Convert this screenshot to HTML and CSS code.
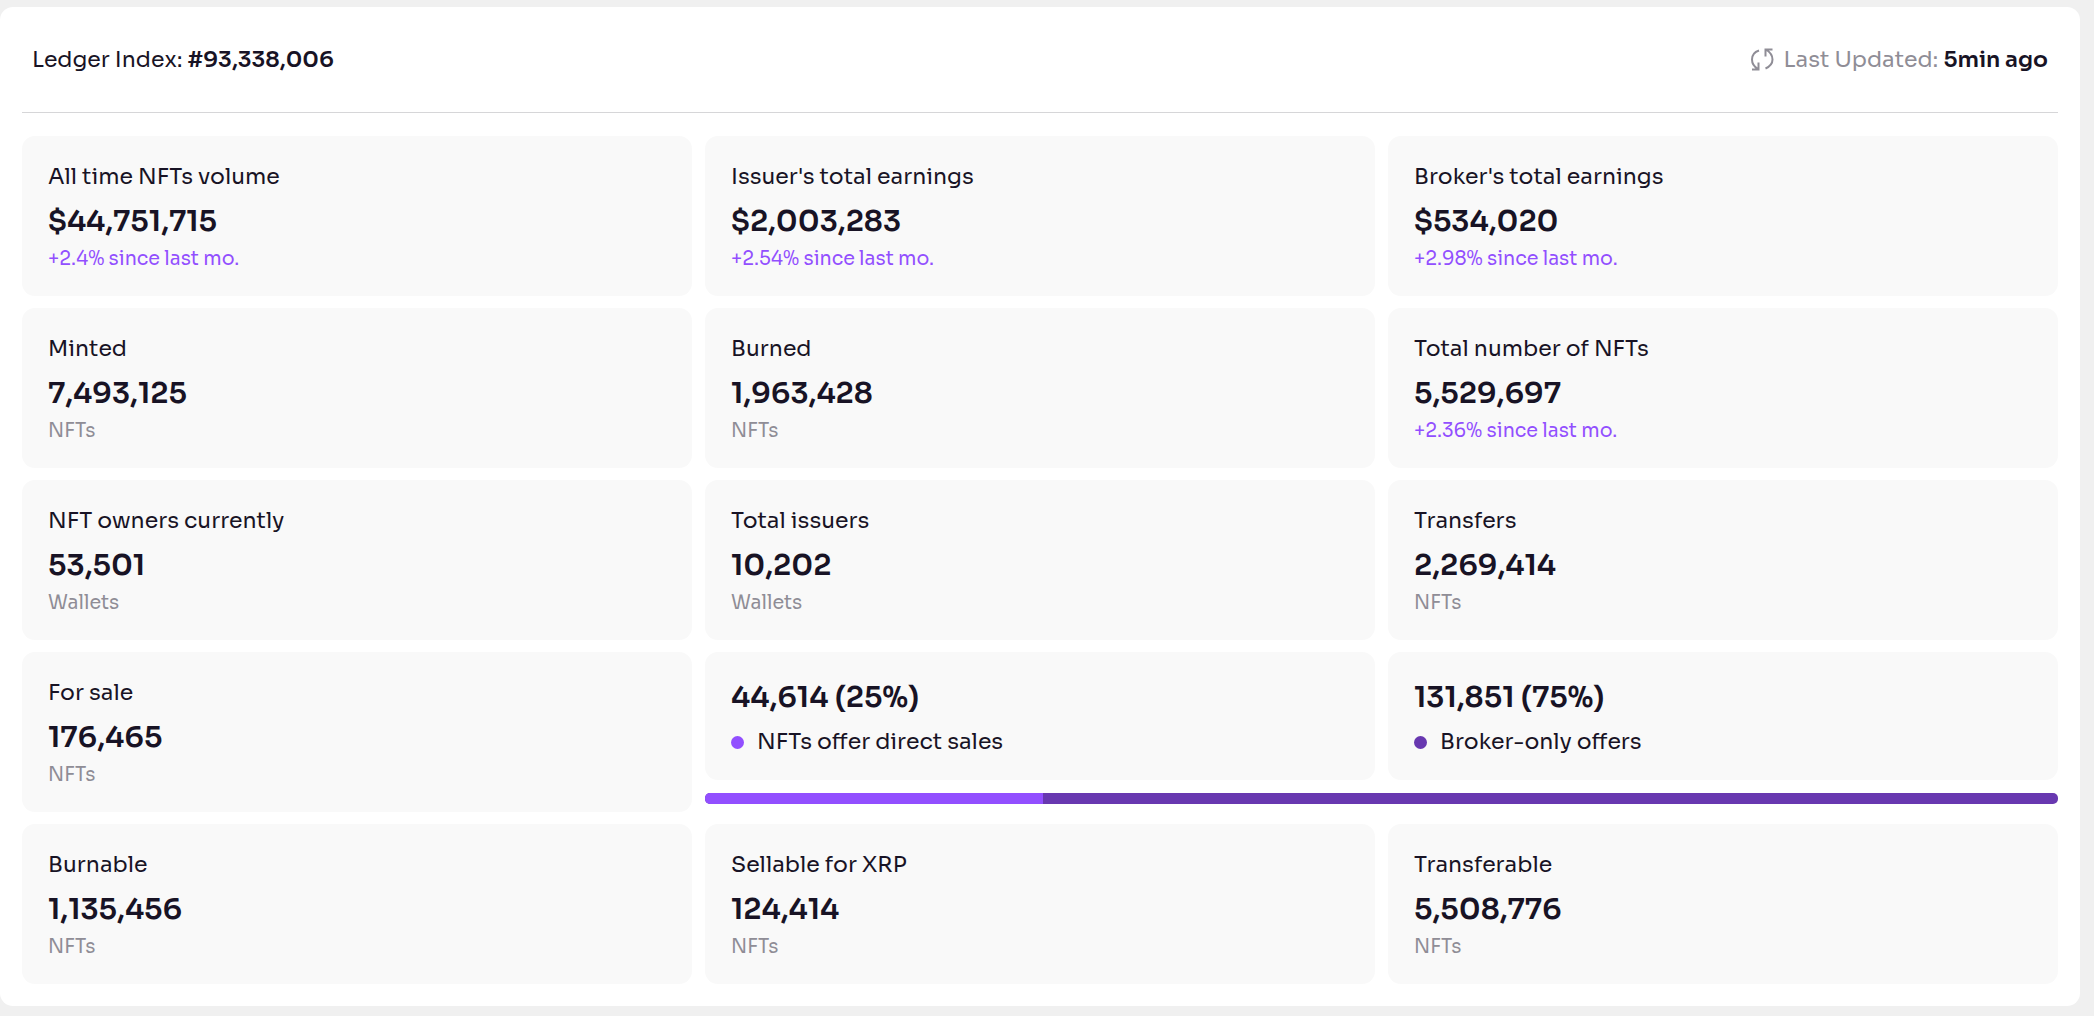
FILE: index.html
```html
<!DOCTYPE html>
<html lang="en">
<head>
<meta charset="utf-8">
<meta name="viewport" content="width=device-width, initial-scale=1">
<title>NFT statistics</title>
<link rel="stylesheet" href="styles.css">
</head>
<body>
<main class="panel">
  <header class="panel-header">
    <p class="ledger">Ledger Index: <strong>#93,338,006</strong></p>
    <p class="updated">
      <svg class="refresh-icon" viewBox="0 0 24 24" aria-hidden="true">
        <path d="M9 2.5C4.500 4 2 7.500 2 11.500C2 15.500 4.500 19 8 21M2 21.500H8.500V14.500"/>
        <path d="M15.500 20.500C20 18.500 22.500 15.500 22.500 11.500C22.500 7.500 20 4 16 1.500M22.500 1.500H15.500V8.500"/>
      </svg>
      <span>Last Updated: <strong>5min ago</strong></span>
    </p>
  </header>

  <section class="stats" aria-label="NFT statistics">
    <article class="card">
      <h2 class="card-title">All time NFTs volume</h2>
      <p class="card-value">$44,751,715</p>
      <p class="card-note card-note-trend">+2.4% since last mo.</p>
    </article>
    <article class="card">
      <h2 class="card-title">Issuer's total earnings</h2>
      <p class="card-value">$2,003,283</p>
      <p class="card-note card-note-trend">+2.54% since last mo.</p>
    </article>
    <article class="card">
      <h2 class="card-title">Broker's total earnings</h2>
      <p class="card-value">$534,020</p>
      <p class="card-note card-note-trend">+2.98% since last mo.</p>
    </article>

    <article class="card">
      <h2 class="card-title">Minted</h2>
      <p class="card-value">7,493,125</p>
      <p class="card-note">NFTs</p>
    </article>
    <article class="card">
      <h2 class="card-title">Burned</h2>
      <p class="card-value">1,963,428</p>
      <p class="card-note">NFTs</p>
    </article>
    <article class="card">
      <h2 class="card-title">Total number of NFTs</h2>
      <p class="card-value">5,529,697</p>
      <p class="card-note card-note-trend">+2.36% since last mo.</p>
    </article>

    <article class="card">
      <h2 class="card-title">NFT owners currently</h2>
      <p class="card-value">53,501</p>
      <p class="card-note">Wallets</p>
    </article>
    <article class="card">
      <h2 class="card-title">Total issuers</h2>
      <p class="card-value">10,202</p>
      <p class="card-note">Wallets</p>
    </article>
    <article class="card">
      <h2 class="card-title">Transfers</h2>
      <p class="card-value">2,269,414</p>
      <p class="card-note">NFTs</p>
    </article>

    <article class="card">
      <h2 class="card-title">For sale</h2>
      <p class="card-value">176,465</p>
      <p class="card-note">NFTs</p>
    </article>
    <div class="sale-split">
      <article class="card card-offer">
        <p class="card-value">44,614 (25%)</p>
        <h2 class="card-title legend legend-direct">NFTs offer direct sales</h2>
      </article>
      <article class="card card-offer">
        <p class="card-value">131,851 (75%)</p>
        <h2 class="card-title legend legend-broker">Broker-only offers</h2>
      </article>
      <div class="split-bar" role="img" aria-label="25% direct sales, 75% broker-only offers">
        <div class="split-fill" style="width: 25%"></div>
      </div>
    </div>

    <article class="card">
      <h2 class="card-title">Burnable</h2>
      <p class="card-value">1,135,456</p>
      <p class="card-note">NFTs</p>
    </article>
    <article class="card">
      <h2 class="card-title">Sellable for XRP</h2>
      <p class="card-value">124,414</p>
      <p class="card-note">NFTs</p>
    </article>
    <article class="card">
      <h2 class="card-title">Transferable</h2>
      <p class="card-value">5,508,776</p>
      <p class="card-note">NFTs</p>
    </article>
  </section>
</main>
</body>
</html>
```
FILE: styles.css
```css
:root {
  --ink: #181325;
  --muted: #8f8d96;
  --violet: #924fff;
  --purple: #6838b0;
  --gap: 13px;
}

* {
  box-sizing: border-box;
}

body {
  margin: 0;
  padding: 7px 14px 10px 0;
  background: #f0f0f0;
  color: var(--ink);
  font-family: "Sora", Inter, "Liberation Sans", sans-serif;
  font-size: 22px;
  line-height: 32px;
}

h2,
p {
  margin: 0;
}

strong {
  font-weight: 600;
}

.panel {
  padding: 0 22px 22px;
  border-radius: 13px;
  background: #fff;
}

.panel-header {
  display: flex;
  justify-content: space-between;
  margin-bottom: 23px;
  padding: 37px 10px 36px;
  border-bottom: 1px solid #d6d6d8;
}

.updated {
  display: flex;
  align-items: center;
  gap: 10px;
  color: var(--muted);
}

.updated strong {
  color: var(--ink);
}

.refresh-icon {
  width: 24px;
  height: 24px;
  fill: none;
  stroke: currentColor;
  stroke-width: 2;
}

.stats {
  display: grid;
  grid-template-columns: repeat(3, 1fr);
  gap: 12px var(--gap);
}

.card {
  display: flex;
  flex-direction: column;
  padding: 25px 26px 24px;
  border-radius: 13px;
  background: #f9f9f9;
}

.card-title {
  font-size: 22px;
  font-weight: 400;
}

.card-value {
  margin: 8px 0 5px;
  font-size: 29px;
  font-weight: 600;
  line-height: 40px;
}

.card-note {
  color: var(--muted);
  font-size: 19px;
  line-height: 26px;
}

.card-note-trend {
  color: var(--violet);
}

.sale-split {
  display: grid;
  grid-column: span 2;
  grid-template-columns: 1fr 1fr;
  align-content: start;
  gap: var(--gap);
}

.card-offer {
  gap: 9px;
  padding: 25px 26px 22px;
}

.card-offer .card-value {
  margin: 0;
}

.legend {
  display: flex;
  align-items: center;
  gap: 13px;
}

.legend::before {
  content: "";
  width: 13px;
  height: 13px;
  border-radius: 50%;
  background: var(--violet);
}

.legend-broker::before {
  background: var(--purple);
}

.split-bar {
  grid-column: span 2;
  height: 11px;
  overflow: hidden;
  border-radius: 5px;
  background: var(--purple);
}

.split-fill {
  height: 100%;
  background: var(--violet);
}
```
